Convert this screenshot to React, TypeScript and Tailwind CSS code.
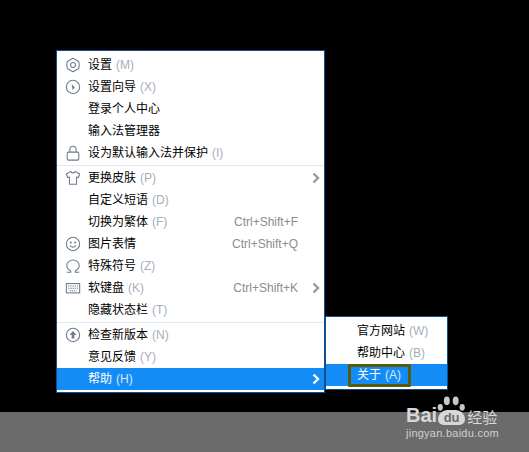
import type { ReactNode } from 'react'

const font = "[font-family:'Liberation_Sans','Noto_Sans_CJK_SC',sans-serif]"

function Icon({ children }: { children: ReactNode }) {
  return (
    <svg viewBox="0 0 18 18" fill="none" stroke="#6f7a8a" strokeWidth="1.2" className="w-4 h-4">
      {children}
    </svg>
  )
}

const icons: Record<string, ReactNode> = {
  gear: (
    <Icon>
      <polygon points="9,1.500 15.500,5 16,9 15.500,13 9,16.500 2.500,13 2,9 2.500,5" strokeLinejoin="round" />
      <circle cx="9" cy="9" r="2.800" />
    </Icon>
  ),
  wizard: (
    <Icon>
      <circle cx="9" cy="9" r="7.500" />
      <path d="M7.500 5.500 L11 9.500 L8.500 12.500 Z" fill="#6f7a8a" stroke="none" />
    </Icon>
  ),
  lock: (
    <Icon>
      <rect x="2.500" y="8" width="13" height="9" rx="1.500" />
      <path d="M5.500 8 V5 a3.500 3.500 0 0 1 7 0 V8" />
    </Icon>
  ),
  shirt: (
    <Icon>
      <path d="M6.500 1.500 L1.500 4.500 L3 8.500 L5 7.800 V16 H13 V7.800 L15 8.500 L16.500 4.500 L11.500 1.500 C11 3.800 7 3.800 6.500 1.500 Z" strokeLinejoin="round" />
    </Icon>
  ),
  smile: (
    <Icon>
      <circle cx="9" cy="9" r="7.500" />
      <circle cx="6.500" cy="7.300" r="1.100" fill="#6f7a8a" stroke="none" />
      <circle cx="11.500" cy="7.300" r="1.100" fill="#6f7a8a" stroke="none" />
      <path d="M5.500 10.500 C6.500 13.200 11.500 13.200 12.500 10.500" />
    </Icon>
  ),
  omega: (
    <Icon>
      <path d="M2 16 H6.500 V14.500 C3.500 13 2 10.800 2 8.500 C2 4.800 5.300 2.300 9 2.300 C12.700 2.300 16 4.800 16 8.500 C16 10.800 14.500 13 11.500 14.500 V16 H16" />
    </Icon>
  ),
  keyboard: (
    <Icon>
      <rect x="1.500" y="4" width="15" height="10.500" />
      <path d="M3.500 6.800 H14.500 M3.500 9.300 H14.500 M5 12 H13" strokeDasharray="1.500 1" />
    </Icon>
  ),
  update: (
    <Icon>
      <circle cx="9" cy="9" r="7.500" />
      <path d="M9 4.500 L13 8.800 H10.500 V13 H7.500 V8.800 H5 Z" fill="#6f7a8a" stroke="none" />
    </Icon>
  ),
}

function Chevron({ white }: { white?: boolean }) {
  return (
    <svg viewBox="0 0 8 12" fill="none" stroke={white ? '#ffffff' : '#9a9a9a'} strokeWidth="2.400" className="w-2 h-3">
      <path d="M1.500 1.500 L6 6 L1.500 10.500" />
    </svg>
  )
}

type Item = {
  label: string
  key: string
  icon?: string
  shortcut?: string
  arrow?: boolean
  active?: boolean
  divider?: boolean
}

const items: Item[] = [
  { label: '设置', key: '(M)', icon: 'gear' },
  { label: '设置向导', key: '(X)', icon: 'wizard' },
  { label: '登录个人中心', key: '' },
  { label: '输入法管理器', key: '' },
  { label: '设为默认输入法并保护', key: '(I)', icon: 'lock', divider: true },
  { label: '更换皮肤', key: '(P)', icon: 'shirt', arrow: true },
  { label: '自定义短语', key: '(D)' },
  { label: '切换为繁体', key: '(F)', shortcut: 'Ctrl+Shift+F' },
  { label: '图片表情', key: '', icon: 'smile', shortcut: 'Ctrl+Shift+Q' },
  { label: '特殊符号', key: '(Z)', icon: 'omega' },
  { label: '软键盘', key: '(K)', icon: 'keyboard', shortcut: 'Ctrl+Shift+K', arrow: true },
  { label: '隐藏状态栏', key: '(T)', divider: true },
  { label: '检查新版本', key: '(N)', icon: 'update' },
  { label: '意见反馈', key: '(Y)' },
  { label: '帮助', key: '(H)', arrow: true, active: true },
]

function MenuRow({ item }: { item: Item }) {
  return (
    <>
      <div className={`h-[22px] flex items-center text-xs ${item.active ? 'bg-[#148cf5] text-white' : 'text-black'}`}>
        <div className="w-[31px] flex justify-end pr-[7px] shrink-0">
          {item.icon && icons[item.icon]}
        </div>
        <span>{item.label}</span>
        {item.key && (
          <span className={`ml-1 ${item.active ? 'text-white/80' : 'text-[#a6aebc]'}`}>{item.key}</span>
        )}
        <span className="ml-auto text-[#8c8c8c]">{item.shortcut}</span>
        <div className="w-[26px] pl-[14px] shrink-0">
          {item.arrow && <Chevron white={item.active} />}
        </div>
      </div>
      {item.divider && <div className="h-px my-px bg-[#e3e6ec]" />}
    </>
  )
}

export default function App() {
  return (
    <div className={`w-[529px] h-[452px] bg-black flex flex-col overflow-hidden relative ${font}`}>
      <div className="h-[412px] flex items-start pl-[56px] pt-[50px] shrink-0">
        <div className="w-[269px] h-[343px] bg-white border border-[#0d4f8f] pt-[3px]">
          {items.map((item) => (
            <MenuRow key={item.label} item={item} />
          ))}
        </div>
        <div className="w-[123px] h-[74px] mt-[266px] bg-white border border-[#0d4f8f] pt-[3px]">
          <div className="h-[22px] flex items-center text-xs text-black pl-[31px]">
            官方网站<span className="ml-1 text-[#a6aebc]">(W)</span>
          </div>
          <div className="h-[22px] flex items-center text-xs text-black pl-[31px]">
            帮助中心<span className="ml-1 text-[#a6aebc]">(B)</span>
          </div>
          <div className="h-[22px] flex items-center text-xs text-white bg-[#148cf5] pl-[31px] relative">
            关于<span className="ml-1 text-white/80">(A)</span>
            <div className="absolute left-[22px] top-0 w-[63px] h-[23px] border-[3px] border-[#5a5a0a] rounded-[1px]" />
          </div>
        </div>
      </div>
      <div className="flex-1 bg-[#6b6b6b]" />

      <div className="absolute left-[405px] top-[396px] w-[124px] text-[#d8d8d8]">
        <svg viewBox="0 0 30 20" fill="#c8c8c8" className="absolute left-[32px] top-0 w-[28px] h-[19px]">
          <ellipse cx="3.500" cy="12" rx="2.800" ry="3.600" />
          <ellipse cx="10.500" cy="5" rx="3.200" ry="4.600" />
          <ellipse cx="20" cy="5" rx="3.200" ry="4.600" />
          <ellipse cx="27" cy="12" rx="2.800" ry="3.600" />
        </svg>
        <div className="h-[29px] flex items-end font-bold text-[20px] leading-none">
          <span className="ml-[1px]">Bai</span>
          <span className="ml-[1px] w-[27px] h-[15px] rounded-t-[10px] rounded-b-[6px] bg-[#d8d8d8] text-[#6b6b6b] text-[13px] text-center leading-[15px]">du</span>
          <span className="ml-[2px] text-[15px] font-normal">经验</span>
        </div>
        <div className="mt-[1px] ml-[1px] text-[11px] leading-[14px] tracking-[0.25px] text-[#d0d0d0]">jingyan.baidu.com</div>
      </div>
    </div>
  )
}
